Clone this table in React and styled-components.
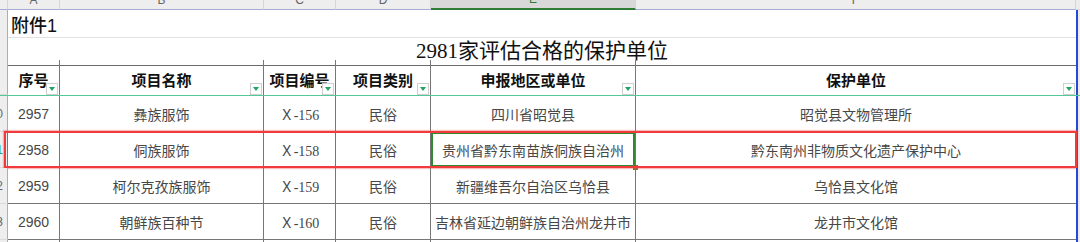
import styled, { createGlobalStyle, css } from "styled-components";

const GlobalStyle = createGlobalStyle`
  html, body {
    margin: 0;
    padding: 0;
    background: #fff;
  }
  body {
    overflow: hidden;
  }
  * {
    box-sizing: border-box;
  }
`;

const COLUMNS = "8px 52px 204px 72px 95px 205px 440px 4px";
const SERIF = `"Liberation Serif", "Noto Sans CJK SC", serif`;
const SANS = `"Liberation Sans", "Noto Sans CJK SC", sans-serif`;

const Sheet = styled.div`
  width: 1080px;
  height: 242px;
  overflow: hidden;
  background: #fff;
  font-family: ${SERIF};
`;

const Row = styled.div`
  display: grid;
  grid-template-columns: ${COLUMNS};
  height: ${(p) => p.$h}px;
  position: relative;
  ${(p) =>
    p.$freeze &&
    css`
      border-bottom: 1px solid #55c89a;
    `}
`;

const ColLetter = styled.div`
  display: flex;
  justify-content: center;
  align-items: flex-end;
  padding-bottom: 3px;
  overflow: hidden;
  background: ${(p) => (p.$active ? "#d8d8d8" : "#eeeeee")};
  border-right: 1px solid #d6d6d6;
  border-bottom: ${(p) => (p.$active ? "2px solid #2f7d34" : "1px solid #a3acd9")};
  font: 12px/1 "Liberation Sans", sans-serif;
  color: ${(p) => (p.$active ? "#2f7d34" : "#666")};
`;

const RowNum = styled.div`
  display: flex;
  justify-content: flex-end;
  align-items: center;
  padding-right: 4px;
  overflow: hidden;
  white-space: nowrap;
  background: #eeeeee;
  border-right: 1px solid ${(p) => (p.$sel ? "#2e9d6b" : "#a3acd9")};
  border-bottom: 1px solid #dadada;
  font: 12px "Liberation Sans", sans-serif;
  color: ${(p) => (p.$sel ? "#1b9b7b" : "#666")};
`;

const Gutter = styled.div`
  background: #ececec;
  border-left: ${(p) => (p.$plain ? "none" : "2px solid #2747d4")};
  border-bottom: ${(p) => (p.$plain ? "1px solid #d6d6d6" : "none")};
`;

const Banner = styled.div`
  grid-column: span 6;
  display: flex;
  align-items: ${(p) => (p.$title ? "flex-end" : "center")};
  justify-content: ${(p) => (p.$title ? "center" : "flex-start")};
  padding: ${(p) => (p.$title ? "0 0 1px 0" : "1px 0 0 3px")};
  border-bottom: 1px solid ${(p) => (p.$title ? "#6a6a6a" : "#e2e2e2")};
  font-family: ${(p) => (p.$title ? SERIF : SANS)};
  font-size: ${(p) => (p.$title ? 21 : 18)}px;
  font-weight: ${(p) => (p.$title ? 400 : 500)};
  color: #111;
  white-space: nowrap;
`;

const HeadCell = styled.div`
  position: relative;
  display: flex;
  align-items: center;
  justify-content: center;
  padding-top: 3px;
  border-right: ${(p) => (p.$last ? "none" : "1px solid #767676")};
  font-family: ${SERIF};
  font-weight: bold;
  font-size: 15px;
  color: #111;
  white-space: nowrap;
`;

const FilterButton = styled.span`
  position: absolute;
  right: 1px;
  bottom: 0;
  width: 12px;
  height: 12px;
  background: #fff;
  border: 1px solid #cfcfcf;
  display: flex;
  align-items: center;
  justify-content: center;

  &::after {
    content: "";
    border-left: 3px solid transparent;
    border-right: 3px solid transparent;
    border-top: 4px solid #1fa464;
  }
`;

const Cell = styled.div`
  position: relative;
  display: flex;
  align-items: center;
  justify-content: center;
  border-right: ${(p) => (p.$last ? "none" : "1px solid #767676")};
  border-bottom: 1px solid #767676;
  font-family: ${(p) => (p.$sans ? SANS : SERIF)};
  font-size: 14px;
  color: #474747;
  white-space: nowrap;

  ${(p) =>
    p.$active &&
    css`
      box-shadow: inset 0 0 0 2px #2f8a2f;
      &::after {
        content: "";
        position: absolute;
        right: -3px;
        bottom: -3px;
        width: 5px;
        height: 5px;
        background: #8a6a32;
      }
    `}
`;

const Selection = styled.div`
  position: absolute;
  left: 4px;
  right: 3px;
  top: -1px;
  bottom: 0;
  border: 2px solid #f03a3c;
  box-shadow: 0 0 1px 1px rgba(240, 70, 70, 0.35);
  pointer-events: none;
`;

const letters = ["A", "B", "C", "D", "E", "F"];
const headers = ["序号", "项目名称", "项目编号", "项目类别", "申报地区或单位", "保护单位"];

const rows = [
  { num: "2960", cells: ["2957", "彝族服饰", "Ｘ-156", "民俗", "四川省昭觉县", "昭觉县文物管理所"] },
  {
    num: "2961",
    selected: true,
    cells: ["2958", "侗族服饰", "Ｘ-158", "民俗", "贵州省黔东南苗族侗族自治州", "黔东南州非物质文化遗产保护中心"],
  },
  { num: "2962", cells: ["2959", "柯尔克孜族服饰", "Ｘ-159", "民俗", "新疆维吾尔自治区乌恰县", "乌恰县文化馆"] },
  { num: "2963", cells: ["2960", "朝鲜族百种节", "Ｘ-160", "民俗", "吉林省延边朝鲜族自治州龙井市", "龙井市文化馆"] },
  { num: "2964", cells: ["", "", "", "", "", ""] },
];

const App = () => {
  return (
    <Sheet>
      <GlobalStyle />

      <Row $h={10}>
        <ColLetter />
        {letters.map((l) => (
          <ColLetter key={l} $active={l === "E"}>
            <span>{l}</span>
          </ColLetter>
        ))}
        <Gutter $plain />
      </Row>

      <Row $h={24}>
        <RowNum />
        <Banner>附件1</Banner>
        <Gutter />
      </Row>

      <Row $h={26}>
        <RowNum />
        <Banner $title>2981家评估合格的保护单位</Banner>
        <Gutter />
      </Row>

      <Row $h={36} $freeze>
        <RowNum />
        {headers.map((h, i) => (
          <HeadCell key={h} $last={i === headers.length - 1}>
            {h}
            <FilterButton />
          </HeadCell>
        ))}
        <Gutter />
      </Row>

      {rows.map((r) => (
        <Row key={r.num} $h={36}>
          <RowNum $sel={r.selected}>{r.num}</RowNum>
          {r.cells.map((c, i) => (
            <Cell
              key={i}
              $sans={i === 0}
              $last={i === r.cells.length - 1}
              $active={r.selected && i === 4}
            >
              {c}
            </Cell>
          ))}
          <Gutter />
          {r.selected && <Selection />}
        </Row>
      ))}
    </Sheet>
  );
};

export default App;
